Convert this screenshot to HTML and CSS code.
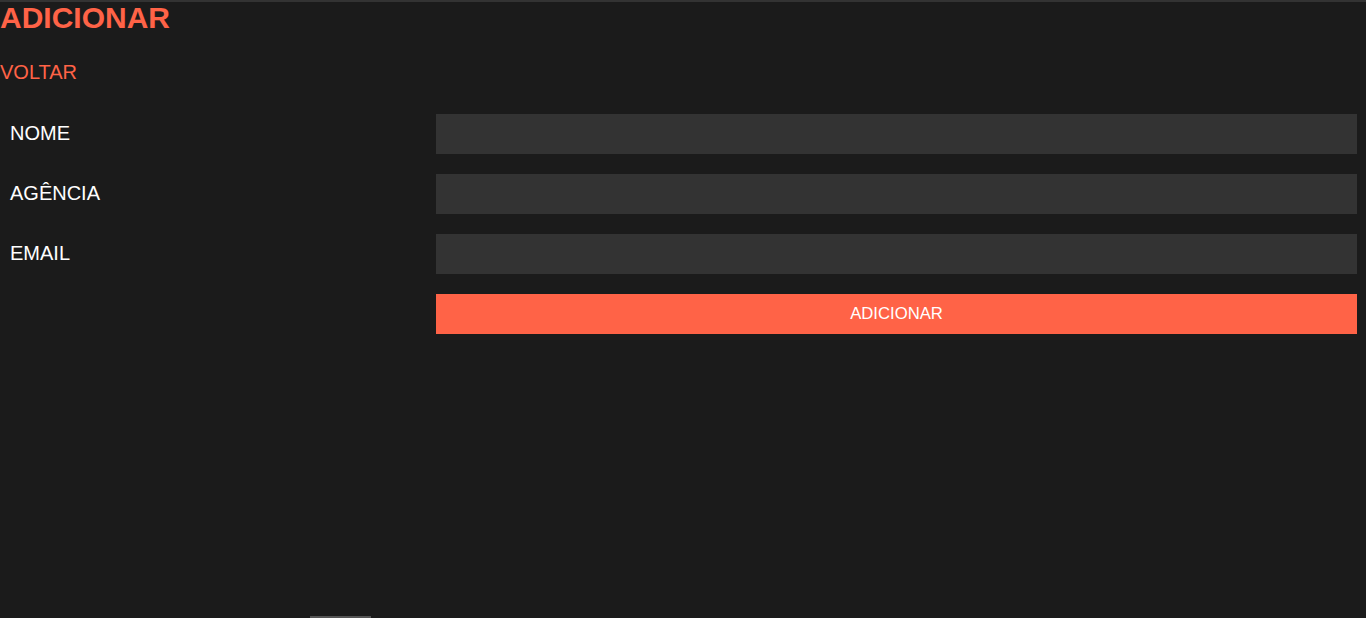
FILE: index.html
```html
<!DOCTYPE html>
<html lang="pt">
<head>
<meta charset="utf-8">
<title>Adicionar</title>
<link rel="stylesheet" href="styles.css">
</head>
<body>
<div class="page">
  <h1 class="title">ADICIONAR</h1>
  <a class="back" href="#">VOLTAR</a>
  <form class="form">
    <label class="label" for="nome">NOME</label>
    <input class="field" id="nome" type="text">
    <label class="label" for="agencia">AGÊNCIA</label>
    <input class="field" id="agencia" type="text">
    <label class="label" for="email">EMAIL</label>
    <input class="field" id="email" type="email">
    <span class="label"></span>
    <button class="submit" type="button">ADICIONAR</button>
  </form>
</div>
<div class="scroll-thumb"></div>
</body>
</html>
```
FILE: styles.css
```css
html, body {
  margin: 0;
  padding: 0;
  height: 100%;
  background: #1b1b1b;
  font-family: "Liberation Sans", Arial, sans-serif;
  overflow: hidden;
}
.page {
  border-top: 2px solid #333333;
  display: flex;
  flex-direction: column;
  align-items: flex-start;
}
.title {
  margin: 0;
  font-size: 30px;
  line-height: 32px;
  font-weight: bold;
  color: #ff6347;
}
.back {
  margin-top: 26px;
  font-size: 20px;
  line-height: 24px;
  color: #ff6347;
  text-decoration: none;
}
.form {
  margin-top: 30px;
  display: grid;
  grid-template-columns: 426px 921px;
  row-gap: 20px;
  padding-left: 10px;
}
.label {
  font-size: 20px;
  line-height: 38px;
  height: 40px;
  color: #ffffff;
}
.field {
  box-sizing: border-box;
  height: 40px;
  width: 921px;
  margin: 0;
  border: none;
  outline: none;
  background: #333333;
  color: #ffffff;
  padding: 0 10px;
  font-family: "Liberation Sans", Arial, sans-serif;
  font-size: 16px;
}
.submit {
  height: 40px;
  width: 921px;
  margin: 0;
  border: none;
  background: #ff6347;
  color: #ffffff;
  font-family: "Liberation Sans", Arial, sans-serif;
  font-size: 16.7px;
  cursor: pointer;
}
.scroll-thumb {
  position: fixed;
  left: 310px;
  bottom: 0;
  width: 61px;
  height: 2px;
  background: #555555;
}
```
